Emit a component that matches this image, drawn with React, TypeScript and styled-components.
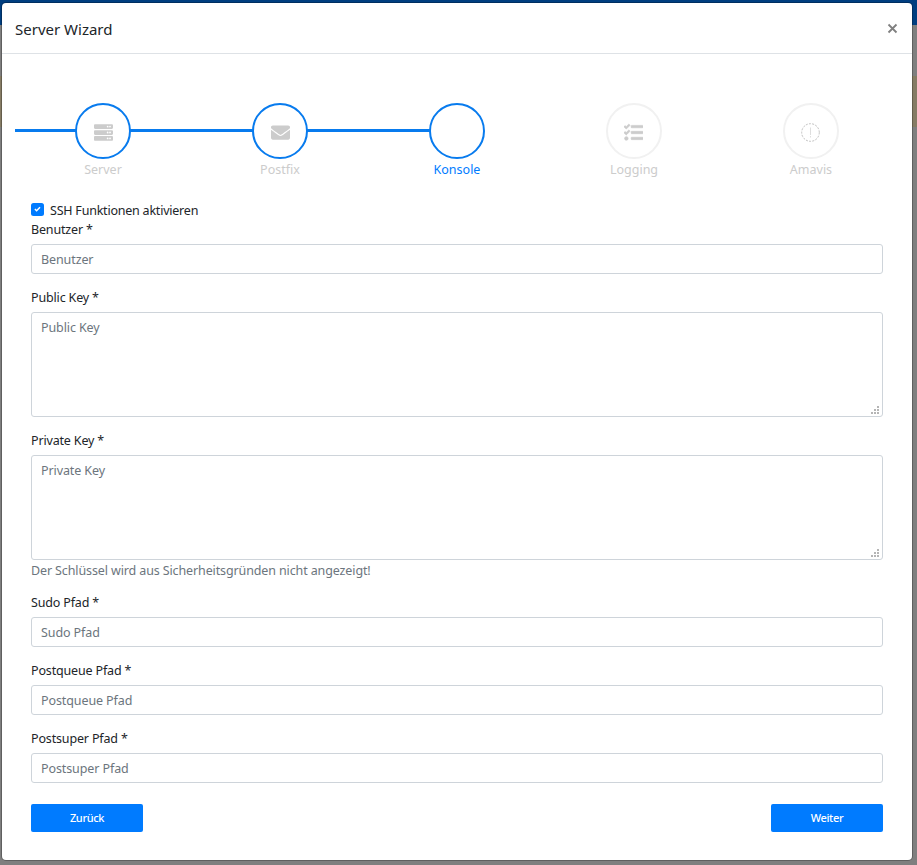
import React from 'react';
import styled, { createGlobalStyle } from 'styled-components';
import { FaServer, FaEnvelope, FaTasks } from 'react-icons/fa';

const GlobalStyle = createGlobalStyle`
  *, *::before, *::after { box-sizing: border-box; }
  body {
    margin: 0;
    font-family: "Noto Sans", "Open Sans", sans-serif;
    font-size: 12.5px;
    line-height: 19px;
    color: #212529;
  }
`;

const Backdrop = styled.div`
  height: 865px;
  overflow: hidden;
  padding: 3px 5px 0 2px;
  background: linear-gradient(#003e80 0 25px, #7f7f7f 25px 76px, #867c65 76px 127px, #7f7f7f 127px);
`;

const Modal = styled.div`
  height: 857px;
  background: #fff;
  border-radius: 4px;
  box-shadow: 0 0 0 1px rgba(0, 0, 0, 0.25);
`;

const Header = styled.header`
  display: flex;
  align-items: center;
  justify-content: space-between;
  height: 51px;
  padding: 2px 13px 0;
  border-bottom: 1px solid #dee2e6;
`;

const Title = styled.h5`
  margin: 0;
  font-size: 15px;
  font-weight: 400;
  line-height: 24px;
`;

const CloseButton = styled.button`
  display: flex;
  width: 13px;
  height: 13px;
  margin-top: -2px;
  padding: 0;
  border: 0;
  background: none;
`;

const Steps = styled.ol`
  display: grid;
  grid-template-columns: repeat(5, 177px);
  margin: 49px 0 0 12.5px;
  padding: 0;
  list-style: none;
`;

const Step = styled.li<{ $reached?: boolean; $first?: boolean; $active?: boolean }>`
  position: relative;
  display: flex;
  flex-direction: column;
  align-items: center;
  color: ${p => (p.$active ? '#007bff' : '#ccc')};

  &::before {
    content: "";
    display: ${p => (p.$reached ? 'block' : 'none')};
    position: absolute;
    top: 26px;
    right: 50%;
    width: ${p => (p.$first ? '88px' : '177px')};
    height: 3px;
    background: #087bee;
  }
`;

const Circle = styled.span<{ $reached?: boolean }>`
  position: relative;
  z-index: 1;
  display: flex;
  align-items: center;
  justify-content: center;
  width: 56px;
  height: 56px;
  padding: 3px ${p => (p.$reached ? '0 0 1px' : '1px 0 0')};
  border: 2px solid ${p => (p.$reached ? '#087bee' : '#f1f1f1')};
  border-radius: 50%;
  background: #fff;
`;

const StepLabel = styled.span`
  margin-top: 1px;
`;

const Form = styled.form`
  display: flex;
  flex-direction: column;
  padding: 22px 29px 0;
`;

const CheckRow = styled.label`
  display: flex;
  align-items: center;
  gap: 6px;
  height: 19px;
  letter-spacing: -0.22px;
`;

const CheckBox = styled.input`
  position: absolute;
  opacity: 0;
`;

const CheckMark = styled.svg`
  width: 13px;
  height: 13px;
  margin-top: -2px;
`;

const Field = styled.div`
  display: flex;
  flex-direction: column;
  margin-bottom: 14px;
`;

const FieldLabel = styled.label`
  height: 24px;
  letter-spacing: -0.16px;
`;

const Input = styled.input`
  height: 30px;
  padding: 0 9px;
  border: 1px solid #ced4da;
  border-radius: 3px;
  font: inherit;
  letter-spacing: -0.1px;
  &::placeholder { color: #6c757d; opacity: 1; }
`;

const AreaWrap = styled.div`
  position: relative;
  display: flex;
`;

const Area = styled.textarea`
  width: 100%;
  height: 105px;
  padding: 5px 9px;
  border: 1px solid #ced4da;
  border-radius: 3px;
  font: inherit;
  letter-spacing: -0.1px;
  resize: none;
  &::placeholder { color: #6c757d; opacity: 1; }
`;

const Grip = styled.svg`
  position: absolute;
  right: 4px;
  bottom: 3px;
`;

const Help = styled.small`
  margin-top: 1px;
  height: 18px;
  font-size: inherit;
  letter-spacing: -0.12px;
  color: #6c757d;
`;

const Actions = styled.div`
  display: flex;
  justify-content: space-between;
  margin-top: 7px;
`;

const Button = styled.button`
  width: 112px;
  height: 28px;
  padding: 0;
  border: 0;
  border-radius: 2px;
  background: #007bff;
  color: #fff;
  font: 500 11px/28px "Noto Sans", "Open Sans", sans-serif;
  letter-spacing: -0.35px;
`;

const AlertIcon = () => (
  <svg width="19" height="19" viewBox="0 0 19 19" fill="none" stroke="#bdbdbd">
    <circle cx="9.5" cy="9.5" r="8.8" strokeDasharray="2 1.3" />
    <path d="M9.5 4.5v7.5M9.5 13v1.5" stroke="#dedede" />
  </svg>
);

const steps = [
  { label: 'Server', icon: <FaServer size={19} />, reached: true },
  { label: 'Postfix', icon: <FaEnvelope size={19} />, reached: true },
  { label: 'Konsole', icon: null, reached: true, active: true },
  { label: 'Logging', icon: <FaTasks size={19} stroke="currentColor" strokeWidth={18} /> },
  { label: 'Amavis', icon: <AlertIcon /> },
];

const TextField = ({ label }: { label: string }) => (
  <Field>
    <FieldLabel>{label} *</FieldLabel>
    <Input placeholder={label} />
  </Field>
);

const AreaField = ({ label, help }: { label: string; help?: string }) => (
  <Field>
    <FieldLabel>{label} *</FieldLabel>
    <AreaWrap>
      <Area placeholder={label} />
      <Grip width="8" height="8" viewBox="0 0 8 8" fill="#b5b5b5">
        <path d="M6 0h2v2H6zM3 3h2v2H3zM6 3h2v2H6zM0 6h2v2H0zM3 6h2v2H3zM6 6h2v2H6z" />
      </Grip>
    </AreaWrap>
    {help && <Help>{help}</Help>}
  </Field>
);

export default function App() {
  return (
    <>
      <GlobalStyle />
      <Backdrop>
        <Modal role="dialog">
          <Header>
            <Title>Server Wizard</Title>
            <CloseButton aria-label="Schließen">
              <svg width="13" height="13" viewBox="0 0 13 13" stroke="#7f7f7f" strokeWidth="1.8">
                <path d="M2.5 2.5l8 8M10.5 2.5l-8 8" />
              </svg>
            </CloseButton>
          </Header>
          <Steps>
            {steps.map((s, i) => (
              <Step key={s.label} $reached={s.reached} $first={i === 0} $active={s.active}>
                <Circle $reached={s.reached}>{s.icon}</Circle>
                <StepLabel>{s.label}</StepLabel>
              </Step>
            ))}
          </Steps>
          <Form onSubmit={e => e.preventDefault()}>
            <CheckRow>
              <CheckBox type="checkbox" defaultChecked />
              <CheckMark viewBox="0 0 13 13">
                <rect width="13" height="13" rx="2.5" fill="#007bff" />
                <path d="M3.9 6l1.7 1.7 3.4-3.4" fill="none" stroke="#fff" strokeWidth="1.5" />
              </CheckMark>
              SSH Funktionen aktivieren
            </CheckRow>
            <TextField label="Benutzer" />
            <AreaField label="Public Key" />
            <AreaField label="Private Key" help="Der Schlüssel wird aus Sicherheitsgründen nicht angezeigt!" />
            <TextField label="Sudo Pfad" />
            <TextField label="Postqueue Pfad" />
            <TextField label="Postsuper Pfad" />
            <Actions>
              <Button type="button">Zurück</Button>
              <Button type="submit">Weiter</Button>
            </Actions>
          </Form>
        </Modal>
      </Backdrop>
    </>
  );
}
